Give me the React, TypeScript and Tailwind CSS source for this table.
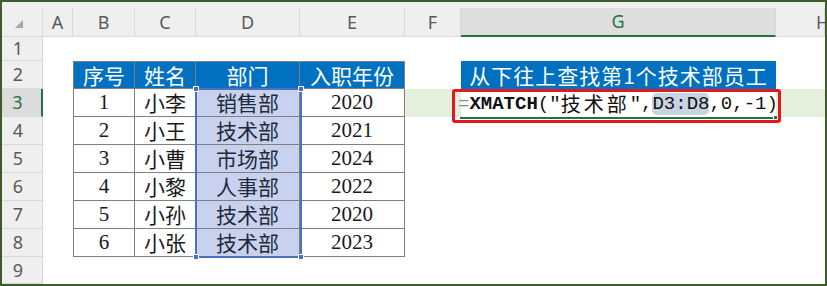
import React from "react";

const CJK = "font-['Noto_Sans_CJK_SC',sans-serif]";
const SERIF = "font-['Liberation_Serif','Noto_Sans_CJK_SC',serif]";
const UI = "font-['Noto_Sans','Liberation_Sans',sans-serif]";

const staff = [
  ["1", "小李", "销售部", "2020"],
  ["2", "小王", "技术部", "2021"],
  ["3", "小曹", "市场部", "2024"],
  ["4", "小黎", "人事部", "2022"],
  ["5", "小孙", "技术部", "2020"],
  ["6", "小张", "技术部", "2023"],
];

const colHead =
  "flex items-center justify-center bg-[#efefef] border-r border-b border-[#d9d9d9] text-[18px] text-[#595959] " +
  UI;
const rowHead =
  "flex items-center justify-center pr-2 bg-[#efefef] border-r border-b border-[#d9d9d9] text-[18px] text-[#595959] " +
  UI;
const grid = "flex items-center justify-center leading-none border-r border-b border-[#808080]";

function Handle({ className }: { className: string }) {
  return <div className={"absolute w-[6px] h-[6px] bg-[#4a70c6] border border-white " + className} />;
}

export default function App() {
  return (
    <div className="w-[827px] h-[286px] border-2 border-[#3e5c2b] bg-white overflow-hidden">
      <div className="h-[6px] bg-[#efefef]" />
      <div className="relative grid grid-cols-[41px_30px_62px_61px_104px_105px_56px_315px_49px] grid-rows-[29px_24px_28px_28px_28px_28px_28px_28px_28px_27px]">
        {/* column headers */}
        <div className="relative bg-[#efefef] border-r border-b border-[#d9d9d9]">
          <svg className="absolute left-[13px] top-[12px]" width="8" height="8" viewBox="0 0 8 8">
            <polygon points="8,0 8,8 0,8" fill="#a6a6a6" />
          </svg>
        </div>
        <div className={colHead}>A</div>
        <div className={colHead}>B</div>
        <div className={colHead}>C</div>
        <div className={colHead}>D</div>
        <div className={colHead}>E</div>
        <div className={colHead}>F</div>
        <div className="flex items-center justify-center bg-[#dedede] border-r border-[#d9d9d9] border-b-2 border-b-[#217346] text-[18px] text-[#217346] font-['Noto_Sans',sans-serif]">
          G
        </div>
        <div className={colHead + " justify-start pl-[40px]"}>H</div>

        {/* row 1 */}
        <div className={rowHead}>1</div>
        <div className="col-span-8" />

        {/* row 2: table headings */}
        <div className={rowHead}>2</div>
        <div />
        {["序号", "姓名", "部门", "入职年份"].map((t, i) => (
          <div
            key={t}
            className={
              grid +
              " border-t bg-[#0070c0] text-white text-[21px] " +
              CJK +
              (i === 0 ? " border-l" : "")
            }
          >
            {t}
          </div>
        ))}
        <div />
        <div
          className={
            "flex items-center justify-center whitespace-nowrap bg-[#0070c0] text-white text-[21px] tracking-[1px] leading-none " +
            CJK
          }
        >
          从下往上查找第1个技术部员工
        </div>
        <div />

        {/* rows 3-8: staff */}
        {staff.map((r, idx) => {
          const active = idx === 0;
          return (
            <React.Fragment key={r[0]}>
              <div
                className={
                  active
                    ? "flex items-center justify-center pr-2 bg-[#dcdcdc] border-b border-[#d9d9d9] border-r-2 border-r-[#217346] text-[18px] text-[#217346] font-['Noto_Sans',sans-serif]"
                    : rowHead
                }
              >
                {idx + 3}
              </div>
              <div />
              <div className={grid + " border-l text-[21px] text-[#1a1a1a] " + SERIF}>{r[0]}</div>
              <div className={grid + " text-[21px] text-[#1a1a1a] " + CJK}>{r[1]}</div>
              <div className={grid + " bg-[#c8d2ee] text-[21px] text-[#1f2a3a] " + CJK}>{r[2]}</div>
              <div className={grid + " text-[21px] text-[#1a1a1a] " + SERIF}>{r[3]}</div>
              <div className={active ? "bg-[#e5f0dc]" : ""} />
              <div />
              <div className={active ? "bg-[#e5f0dc]" : ""} />
            </React.Fragment>
          );
        })}

        {/* row 9 */}
        <div className={rowHead}>9</div>
        <div className="col-span-8" />

        {/* selected range D3:D8 */}
        <div className="absolute left-[193px] top-[80px] w-[107px] h-[170px] border-2 border-[#4a70c6] pointer-events-none">
          <Handle className="-left-[4px] -top-[4px]" />
          <Handle className="-right-[4px] -top-[4px]" />
          <Handle className="-left-[4px] -bottom-[4px]" />
          <Handle className="-right-[4px] -bottom-[4px]" />
        </div>

        {/* in-cell formula editor on G3 */}
        <div className="absolute left-[450px] top-[81px] w-[329px] h-[34px] border-[3px] border-[#e3171e] rounded-[3px]">
          <div className="flex items-center h-[24px] pl-[3px] text-[19px] leading-none text-[#111] whitespace-nowrap font-['Liberation_Mono',monospace]">
            <span className="text-[#8a8a8a]">=</span>
            <span className="font-bold">XMATCH</span>
            <span>(</span>
            <span>"</span>
            <span className={"text-[20px] tracking-[3px] " + CJK}>技术部</span>
            <span>"</span>
            <span>,</span>
            <span className="bg-[#c7d3e2] rounded-[5px] h-[22px] flex items-center">D3:D8</span>
            <span>,0,-1)</span>
          </div>
          <div className="absolute left-[5px] top-[25px] w-[316px] h-[2px] bg-[#217346]" />
          <div className="absolute left-[318px] top-[23px] w-[5px] h-[5px] bg-[#217346] border border-white" />
        </div>
      </div>
    </div>
  );
}
